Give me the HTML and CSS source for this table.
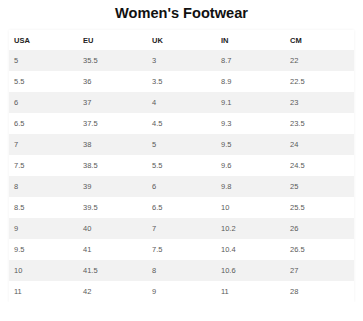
FILE: index.html
```html
<!DOCTYPE html>
<html lang="en">
<head>
    <meta charset="UTF-8">
    <title>Women's Footwear</title>
    <link rel="stylesheet" href="styles.css">
</head>
<body>
    <h1 class="title">Women's Footwear</h1>

    <table class="size-table">
        <thead>
            <tr><th>USA</th><th>EU</th><th>UK</th><th>IN</th><th>CM</th></tr>
        </thead>
        <tbody>
            <tr><td>5</td><td>35.5</td><td>3</td><td>8.7</td><td>22</td></tr>
            <tr><td>5.5</td><td>36</td><td>3.5</td><td>8.9</td><td>22.5</td></tr>
            <tr><td>6</td><td>37</td><td>4</td><td>9.1</td><td>23</td></tr>
            <tr><td>6.5</td><td>37.5</td><td>4.5</td><td>9.3</td><td>23.5</td></tr>
            <tr><td>7</td><td>38</td><td>5</td><td>9.5</td><td>24</td></tr>
            <tr><td>7.5</td><td>38.5</td><td>5.5</td><td>9.6</td><td>24.5</td></tr>
            <tr><td>8</td><td>39</td><td>6</td><td>9.8</td><td>25</td></tr>
            <tr><td>8.5</td><td>39.5</td><td>6.5</td><td>10</td><td>25.5</td></tr>
            <tr><td>9</td><td>40</td><td>7</td><td>10.2</td><td>26</td></tr>
            <tr><td>9.5</td><td>41</td><td>7.5</td><td>10.4</td><td>26.5</td></tr>
            <tr><td>10</td><td>41.5</td><td>8</td><td>10.6</td><td>27</td></tr>
            <tr><td>11</td><td>42</td><td>9</td><td>11</td><td>28</td></tr>
        </tbody>
    </table>
</body>
</html>
```
FILE: styles.css
```css
body {
    margin: 0;
    padding: 0;
    background-color: #fff;
    font-family: 'Liberation Sans', Arial, sans-serif;
    color: #5a5a5a;
}
.title {
    margin: 0;
    padding-top: 4px;
    height: 26px;
    font-size: 14.6px;
    line-height: 18px;
    text-align: center;
    color: #111;
}
.size-table {
    width: 345px;
    margin: 0 auto;
    border-collapse: collapse;
    table-layout: fixed;
    box-shadow: 0 0 3px rgba(0,0,0,0.06);
    font-size: 7.5px;
}
.size-table th,
.size-table td {
    text-align: left;
    padding: 0 0 0 5px;
}
.size-table th {
    height: 20px;
    font-weight: bold;
    color: #222;
}
.size-table td {
    height: 21px;
}
.size-table tbody tr:nth-child(odd) {
    background-color: #f2f2f2;
}
```
